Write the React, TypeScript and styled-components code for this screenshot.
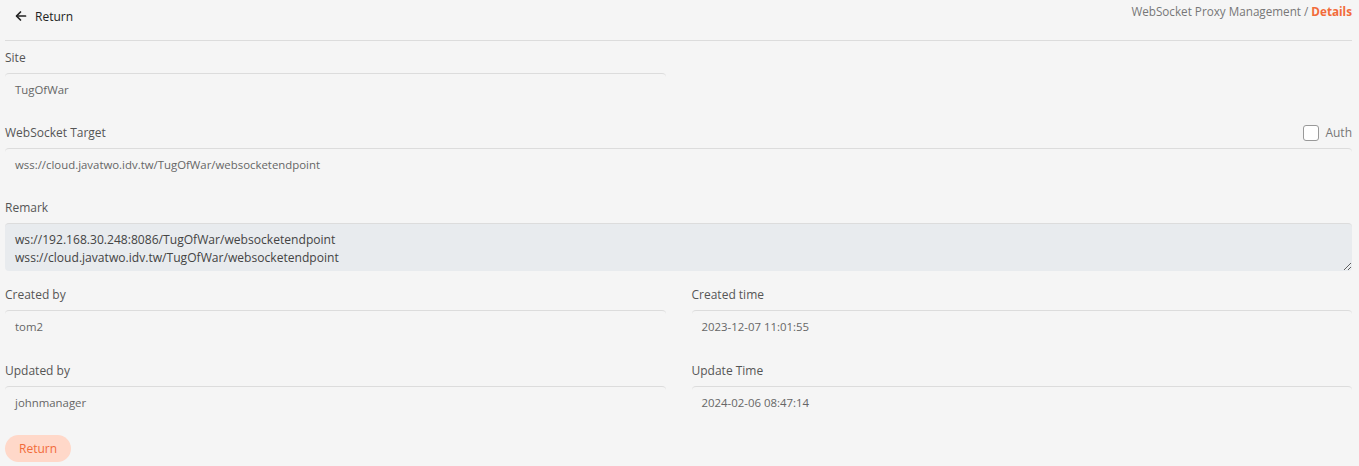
import React from 'react';
import styled, { createGlobalStyle } from 'styled-components';

const GlobalStyle = createGlobalStyle`
  html, body {
    margin: 0;
    padding: 0;
    background: #f5f5f5;
    font-family: "Open Sans", "Noto Sans", sans-serif;
  }
`;

const Page = styled.div`
  padding: 0 7px 0 5px;
  color: #444;
`;

const Header = styled.div`
  display: flex;
  align-items: center;
  justify-content: space-between;
  height: 41px;
  box-sizing: border-box;
  border-bottom: 1px solid #dcdcdc;
`;

const BackLink = styled.button`
  display: flex;
  align-items: center;
  gap: 8px;
  border: none;
  background: none;
  padding: 0 0 0 10px;
  margin-top: -8px;
  font-family: inherit;
  font-size: 12px;
  color: #222;
  cursor: pointer;
`;

const Breadcrumb = styled.div`
  font-size: 11.7px;
  color: #777;
  margin-top: -18px;

  strong {
    color: #f26b3a;
    font-weight: 700;
  }
`;

const Row = styled.div<{ $cols: number }>`
  display: grid;
  grid-template-columns: ${({ $cols }) => ($cols === 2 ? '1fr 1fr' : '1fr')};
  column-gap: 26px;
`;

const Field = styled.div<{ $gap?: number }>`
  display: flex;
  flex-direction: column;
  margin-bottom: ${({ $gap }) => $gap ?? 11}px;
`;

const LabelRow = styled.div`
  display: flex;
  align-items: center;
  justify-content: space-between;
  height: 32px;
  padding-top: 1px;
  box-sizing: border-box;
`;

const Label = styled.label`
  font-size: 12px;
  color: #555;
`;

const Value = styled.div`
  border-top: 1px solid #dcdcdc;
  border-radius: 4px 4px 0 0;
  height: 32px;
  box-sizing: border-box;
  padding: 0 10px 1px;
  display: flex;
  align-items: center;
  font-size: 11.4px;
  color: #666;
`;

const CheckLabel = styled.label`
  display: flex;
  align-items: center;
  gap: 6px;
  font-size: 12px;
  color: #777;
`;

const Box = styled.span`
  width: 16px;
  height: 16px;
  border: 1px solid #999;
  border-radius: 3px;
  background: #fff;
  box-sizing: border-box;
`;

const TextArea = styled.textarea`
  display: block;
  box-sizing: border-box;
  width: 100%;
  height: 48px;
  margin: 0;
  border: none;
  border-top: 1px solid #dcdcdc;
  border-radius: 4px;
  background: #e8ebee;
  padding: 7px 10px 0;
  font-family: inherit;
  font-size: 12.1px;
  line-height: 18px;
  color: #444;
  resize: vertical;
  outline: none;
`;

const Footer = styled.div`
  padding-top: 17px;
`;

const PillButton = styled.button`
  height: 27px;
  padding: 0 14px;
  border: none;
  border-radius: 14px;
  background: #ffd8c9;
  color: #f26b3a;
  font-family: inherit;
  font-size: 12px;
  cursor: pointer;
`;

const ArrowLeft = () => (
  <svg width="12" height="12" viewBox="0 0 24 24" fill="none" stroke="#222" strokeWidth="3.4" strokeLinecap="round" strokeLinejoin="round">
    <path d="M21 12H4" />
    <path d="M11 4l-8 8 8 8" />
  </svg>
);

const App: React.FC = () => (
  <>
    <GlobalStyle />
    <Page>
      <Header>
        <BackLink>
          <ArrowLeft />
          Return
        </BackLink>
        <Breadcrumb>
          WebSocket Proxy Management / <strong>Details</strong>
        </Breadcrumb>
      </Header>

      <Row $cols={2}>
        <Field>
          <LabelRow>
            <Label>Site</Label>
          </LabelRow>
          <Value>TugOfWar</Value>
        </Field>
      </Row>

      <Row $cols={1}>
        <Field>
          <LabelRow>
            <Label>WebSocket Target</Label>
            <CheckLabel>
              <Box />
              Auth
            </CheckLabel>
          </LabelRow>
          <Value>wss://cloud.javatwo.idv.tw/TugOfWar/websocketendpoint</Value>
        </Field>
      </Row>

      <Row $cols={1}>
        <Field $gap={7}>
          <LabelRow>
            <Label>Remark</Label>
          </LabelRow>
          <TextArea
            readOnly
            defaultValue={'ws://192.168.30.248:8086/TugOfWar/websocketendpoint\nwss://cloud.javatwo.idv.tw/TugOfWar/websocketendpoint'}
          />
        </Field>
      </Row>

      <Row $cols={2}>
        <Field $gap={12}>
          <LabelRow>
            <Label>Created by</Label>
          </LabelRow>
          <Value>tom2</Value>
        </Field>
        <Field $gap={12}>
          <LabelRow>
            <Label>Created time</Label>
          </LabelRow>
          <Value>2023-12-07 11:01:55</Value>
        </Field>
      </Row>

      <Row $cols={2}>
        <Field $gap={0}>
          <LabelRow>
            <Label>Updated by</Label>
          </LabelRow>
          <Value>johnmanager</Value>
        </Field>
        <Field $gap={0}>
          <LabelRow>
            <Label>Update Time</Label>
          </LabelRow>
          <Value>2024-02-06 08:47:14</Value>
        </Field>
      </Row>

      <Footer>
        <PillButton>Return</PillButton>
      </Footer>
    </Page>
  </>
);

export default App;
